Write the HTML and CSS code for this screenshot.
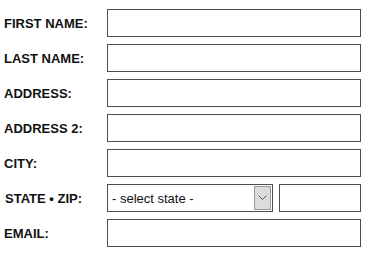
FILE: index.html
```html
<!DOCTYPE html>
<html lang="en">
<head>
    <meta charset="UTF-8">
    <meta name="viewport" content="width=device-width, initial-scale=1.0">
    <title>Address Form</title>
    <link rel="stylesheet" href="styles.css">
</head>
<body>
    <form class="form">
        <label class="label" for="first-name">FIRST NAME:</label>
        <input class="field" id="first-name" type="text">

        <label class="label" for="last-name">LAST NAME:</label>
        <input class="field" id="last-name" type="text">

        <label class="label" for="address">ADDRESS:</label>
        <input class="field" id="address" type="text">

        <label class="label" for="address2">ADDRESS 2:</label>
        <input class="field" id="address2" type="text">

        <label class="label" for="city">CITY:</label>
        <input class="field" id="city" type="text">

        <label class="label label-state" for="state">STATE &bull; ZIP:</label>
        <div class="state-zip">
            <div class="select-box">
                <select class="select" id="state">
                    <option>- select state -</option>
                </select>
                <span class="select-btn">
                    <svg width="9" height="6" viewBox="0 0 9 6"><path d="M0.5 0.5 L4.5 4.5 L8.5 0.5" fill="none" stroke="#555" stroke-width="1"/></svg>
                </span>
            </div>
            <input class="field zip" id="zip" type="text">
        </div>

        <label class="label" for="email">EMAIL:</label>
        <input class="field" id="email" type="email">
    </form>
</body>
</html>
```

FILE: styles.css
```css
* {
    margin: 0;
    padding: 0;
    box-sizing: border-box;
}

body {
    font-family: "Liberation Sans", Arial, sans-serif;
    background: #fff;
}

.form {
    display: grid;
    grid-template-columns: 103px 254px;
    grid-auto-rows: 28px;
    row-gap: 7px;
    padding: 9px 0 0 4px;
}

.label {
    display: flex;
    align-items: center;
    font-size: 13px;
    font-weight: bold;
    color: #111;
}

.label-state {
    padding-left: 1px;
}

.field {
    width: 100%;
    height: 28px;
    border: 1px solid #4d4d4d;
    background: #fff;
    font-family: inherit;
    font-size: 13px;
    padding: 0 5px;
    outline: none;
}

.state-zip {
    display: flex;
    gap: 6px;
}

.select-box {
    display: flex;
    width: 166px;
    height: 28px;
    border: 1px solid #4d4d4d;
    background: #fff;
}

.select {
    flex: 1;
    min-width: 0;
    appearance: none;
    -webkit-appearance: none;
    border: none;
    background: transparent;
    font-family: inherit;
    font-size: 13px;
    color: #111;
    padding: 0 0 0 4px;
    outline: none;
}

.select-btn {
    width: 17px;
    margin: 1px;
    border: 1px solid #9a9a9a;
    background: #dcdcdc;
    display: flex;
    align-items: center;
    justify-content: center;
}

.zip {
    width: 82px;
}
```
